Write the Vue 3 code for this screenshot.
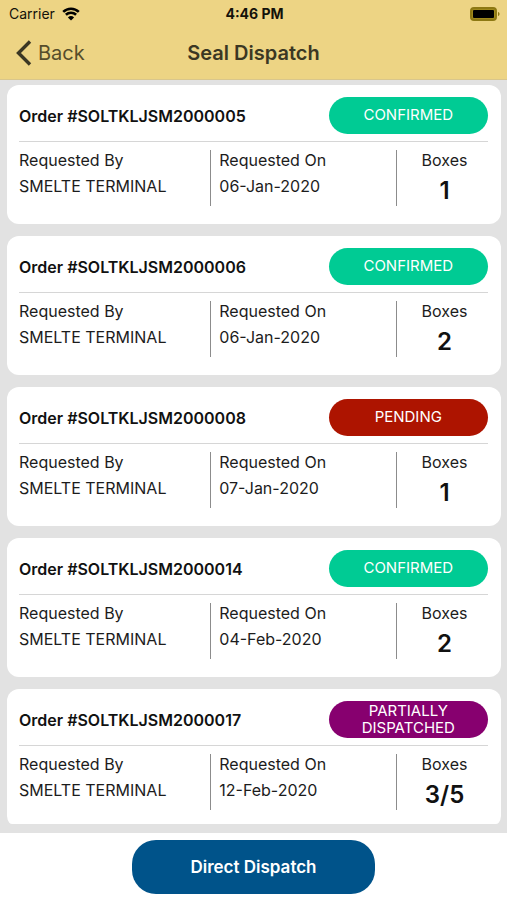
<template>
  <div class="screen">
    <header class="header">
      <div class="status-bar">
        <div class="carrier">
          <span>Carrier</span>
          <svg class="wifi" viewBox="0 0 18 14" aria-hidden="true">
            <path d="M1.2 4.9a11.2 11.2 0 0 1 15.6 0" />
            <path d="M3.9 7.8a7.3 7.3 0 0 1 10.2 0" />
            <path class="dot" d="M9 13.6 5.9 10.4a4.5 4.5 0 0 1 6.2 0z" />
          </svg>
        </div>
        <span class="time">4:46 PM</span>
        <svg class="battery" viewBox="0 0 30 14" aria-hidden="true">
          <rect class="shell" x="1" y="1" width="25" height="12" rx="3" />
          <rect x="3" y="3" width="21" height="8" rx="1" />
          <path class="cap" d="M28 5c2 .6 2 3.4 0 4z" />
        </svg>
      </div>
      <nav class="nav-bar">
        <button type="button" class="back">
          <svg viewBox="0 0 16 26" aria-hidden="true">
            <path d="M14 1.5 2.5 13 14 24.5" />
          </svg>
          <span>Back</span>
        </button>
        <h1>Seal Dispatch</h1>
      </nav>
    </header>

    <main class="content">
      <div class="orders">
        <article v-for="order in orders" :key="order.id" class="card">
          <div class="card-head">
            <h2>Order #{{ order.id }}</h2>
            <span class="badge" :class="order.status">{{ labels[order.status] }}</span>
          </div>
          <div class="card-body">
            <div class="col by">
              <span>Requested By</span>
              <span>{{ order.by }}</span>
            </div>
            <div class="col on">
              <span>Requested On</span>
              <span>{{ order.date }}</span>
            </div>
            <div class="col boxes">
              <span>Boxes</span>
              <strong>{{ order.boxes }}</strong>
            </div>
          </div>
        </article>
      </div>
    </main>

    <footer class="footer">
      <button type="button" class="dispatch">Direct Dispatch</button>
    </footer>
  </div>
</template>

<script setup>
const labels = {
  confirmed: 'CONFIRMED',
  pending: 'PENDING',
  partial: 'PARTIALLY DISPATCHED'
}

const orders = [
  { id: 'SOLTKLJSM2000005', status: 'confirmed', by: 'SMELTE TERMINAL', date: '06-Jan-2020', boxes: '1' },
  { id: 'SOLTKLJSM2000006', status: 'confirmed', by: 'SMELTE TERMINAL', date: '06-Jan-2020', boxes: '2' },
  { id: 'SOLTKLJSM2000008', status: 'pending', by: 'SMELTE TERMINAL', date: '07-Jan-2020', boxes: '1' },
  { id: 'SOLTKLJSM2000014', status: 'confirmed', by: 'SMELTE TERMINAL', date: '04-Feb-2020', boxes: '2' },
  { id: 'SOLTKLJSM2000017', status: 'partial', by: 'SMELTE TERMINAL', date: '12-Feb-2020', boxes: '3/5' }
]
</script>

<style>
body {
  margin: 0;
}
</style>

<style scoped>
.screen {
  display: flex;
  flex-direction: column;
  height: 100vh;
  background: #fff;
  color: #1c1c1c;
  font-family: Inter, 'Liberation Sans', sans-serif;
  font-size: 16px;
}
button {
  border: 0;
  padding: 0;
  background: none;
  font-family: inherit;
  cursor: pointer;
}

/* Header */
.header {
  background: #edd484;
  border-bottom: 1px solid #d9c68c;
}
.status-bar {
  display: grid;
  grid-template-columns: 1fr auto 1fr;
  align-items: center;
  height: 27px;
  padding: 0 7px 0 9px;
  color: #14120a;
  font-size: 14px;
}
.carrier {
  display: flex;
  align-items: center;
  gap: 7px;
}
.wifi {
  width: 18px;
  height: 14px;
  fill: none;
  stroke: #000;
  stroke-width: 2.6;
}
.wifi .dot {
  fill: #000;
  stroke: none;
}
.time {
  font-weight: 700;
}
.battery {
  justify-self: end;
  width: 30px;
  height: 14px;
}
.battery .shell {
  fill: #a08a1c;
  stroke: #8d7813;
  stroke-width: 2;
}
.battery .cap {
  fill: #8d7813;
}
.nav-bar {
  display: grid;
  grid-template-columns: 1fr auto 1fr;
  align-items: center;
  height: 52px;
  padding: 0 16px;
  color: #3b3723;
}
.back {
  display: flex;
  align-items: center;
  justify-self: start;
  gap: 6px;
  color: #564d2b;
  font-size: 20px;
}
.back svg {
  width: 16px;
  height: 26px;
  fill: none;
  stroke: #3b3723;
  stroke-width: 3.4;
}
h1 {
  margin: 0;
  font-size: 20px;
  font-weight: 600;
}

/* Order list */
.content {
  display: flex;
  flex: 1;
  min-height: 0;
  padding: 5px 6px 9px 7px;
  background: #e2e2e2;
}
.orders {
  display: flex;
  flex: 1;
  flex-direction: column;
  gap: 12px;
  overflow-y: auto;
  border-radius: 5px;
  scrollbar-width: none;
}
.card {
  flex-shrink: 0;
  padding: 12px 13px 18px 12px;
  border-radius: 12px;
  background: #fff;
}
.card-head {
  display: flex;
  align-items: center;
  justify-content: space-between;
  padding-bottom: 7px;
  border-bottom: 1px solid #d6d6d6;
}
h2 {
  margin: 0;
  color: #111;
  font-size: 16px;
  font-weight: 600;
}
.badge {
  display: flex;
  align-items: center;
  justify-content: center;
  box-sizing: border-box;
  width: 34%;
  height: 37px;
  padding: 0 24px 2px;
  border-radius: 19px;
  color: #fff;
  font-size: 15px;
  line-height: 17px;
  text-align: center;
}
.badge.confirmed {
  background: #00cb94;
}
.badge.pending {
  background: #ad1400;
}
.badge.partial {
  background: #87006f;
}
.card-body {
  display: flex;
  padding-top: 8px;
}
.col {
  display: flex;
  flex-direction: column;
  gap: 6px;
  box-sizing: border-box;
  min-height: 56px;
  line-height: 20px;
}
.by {
  width: 41%;
  border-right: 1px solid #8c8c8c;
}
.on {
  flex: 1;
  padding-left: 8px;
  border-right: 1px solid #8c8c8c;
}
.boxes {
  align-items: center;
  width: 91px;
  padding-left: 4px;
}
.boxes strong {
  color: #111;
  font-size: 24px;
  font-weight: 600;
  line-height: 30px;
}

/* Footer */
.footer {
  display: flex;
  justify-content: center;
  padding: 7px 0 6px;
}
.dispatch {
  width: 48%;
  height: 54px;
  border-radius: 24px;
  background: #00538a;
  color: #fff;
  font-size: 17px;
  font-weight: 600;
}
</style>
